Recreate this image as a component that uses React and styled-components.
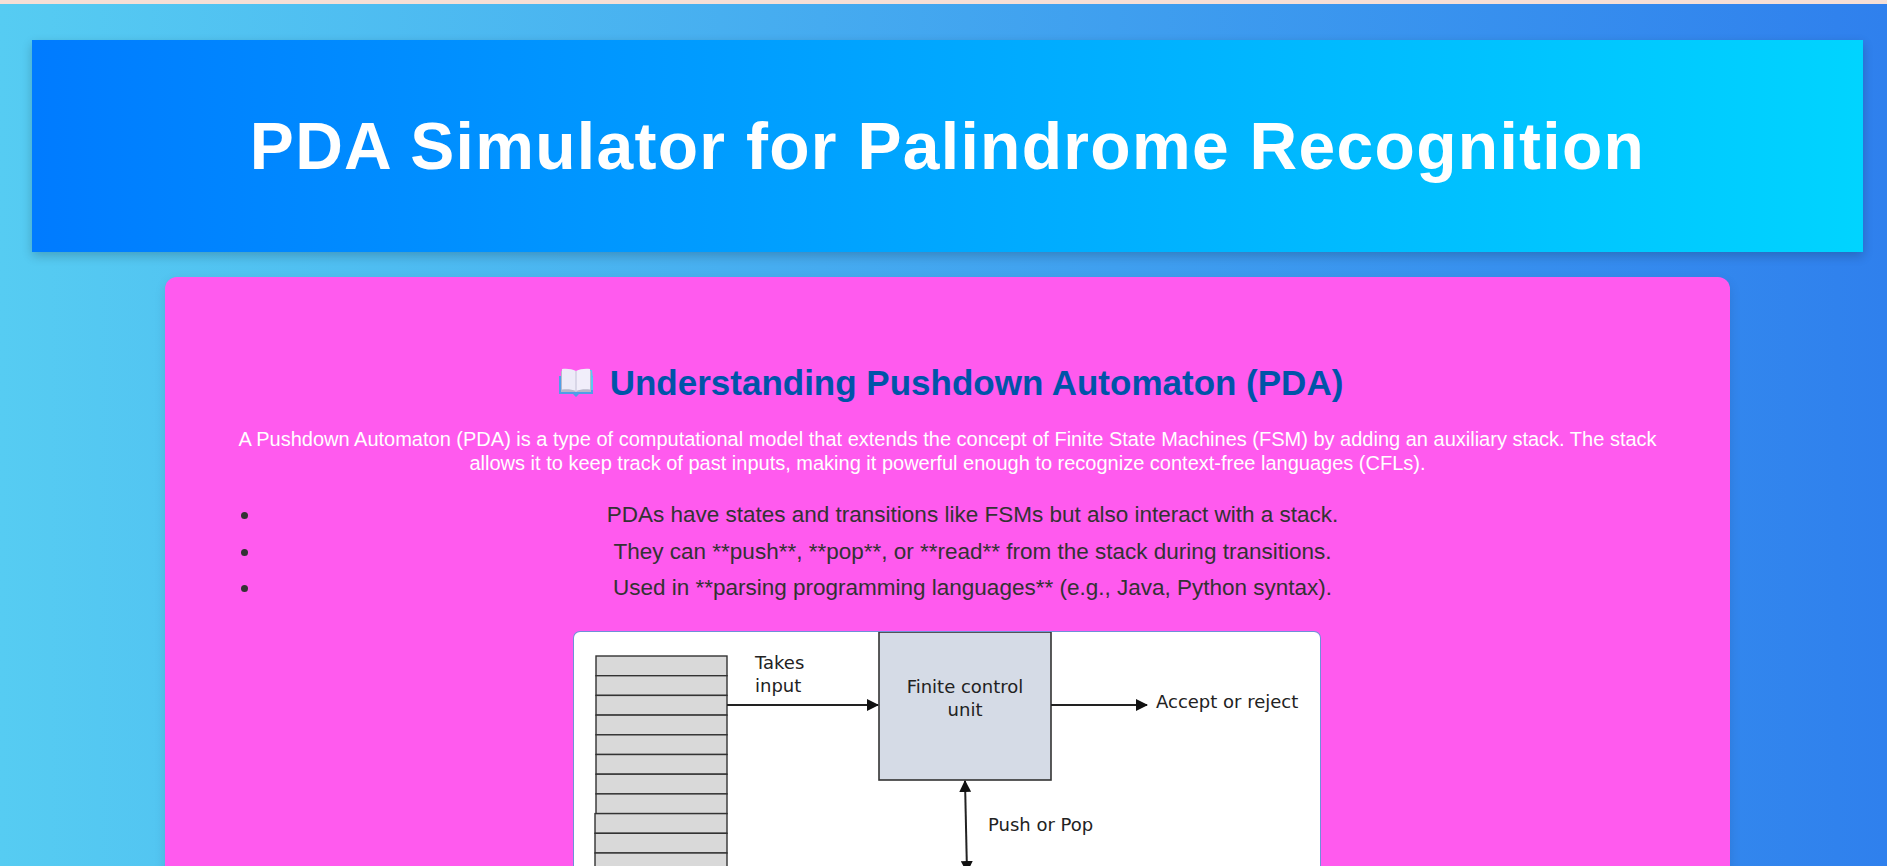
import React from 'react';
import styled, { createGlobalStyle } from 'styled-components';

const GlobalStyle = createGlobalStyle`
  html, body {
    margin: 0;
    height: 100%;
    overflow: hidden;
  }
  body {
    font-family: "Liberation Sans", Arial, sans-serif;
  }
`;

const TopStrip = styled.div`
  height: 4px;
  background: #f5dfd6;
`;

const Page = styled.div`
  box-sizing: border-box;
  height: 862px;
  overflow: hidden;
  padding: 36px 24px 0 32px;
  background: linear-gradient(to right, #56ccf2, #2f80ed);
`;

const Header = styled.header`
  height: 212px;
  display: flex;
  align-items: center;
  justify-content: center;
  background: linear-gradient(to right, #007bff, #00d4ff);
  box-shadow: 0 4px 10px rgba(0, 0, 0, 0.2);
`;

const Title = styled.h1`
  margin: 0;
  color: #fff;
  font-size: 66px;
  font-weight: 700;
  letter-spacing: 1.3px;
`;

const Card = styled.section`
  box-sizing: border-box;
  width: 1565px;
  margin: 25px auto 0;
  padding: 86px 46px 40px;
  background: #ff5aee;
  border-radius: 12px;
  box-shadow: 0 4px 12px rgba(0, 0, 0, 0.1);
  text-align: center;
`;

const Heading = styled.h2`
  display: flex;
  align-items: center;
  justify-content: center;
  gap: 16px;
  margin: 0 0 24px;
  padding-left: 6px;
  color: #0054a8;
  font-size: 35px;
  font-weight: 700;
  line-height: 40px;
`;

const Intro = styled.p`
  margin: 0 0 22px;
  color: #fff;
  font-size: 20px;
  line-height: 24px;
`;

const Points = styled.ul`
  margin: 0 0 25px 4px;
  padding: 0 0 0 46px;
  color: #333;
`;

const Point = styled.li`
  font-size: 22.5px;
  line-height: 36.6px;
`;

const Diagram = styled.svg`
  display: block;
  margin: 0 0 0 362.5px;
  background: #fff;
  border-radius: 6px;
  box-shadow: 0 0 0 1px #6f8fd8;
`;

const BookIcon = () => (
  <svg width="36" height="30" viewBox="0 0 36 30" aria-hidden="true">
    <path d="M1 8h34v18H21l-3 3-3-3H1z" fill="#4f9fe8" />
    <path d="M31 2h3l1 8v12h-4z" fill="#5bc8f0" />
    <path d="M3 3h30v21H3z" fill="#b7b7ca" />
    <path d="M4 1c5-.6 10 0 14 2v20c-4-1.6-9-2-14-1.4z" fill="#edebf8" />
    <path d="M32 1c-5-.6-10 0-14 2v20c4-1.6 9-2 14-1.4z" fill="#f1eefa" />
    <path d="M18 3v21" stroke="#cfcde0" strokeWidth="1.4" />
  </svg>
);

const rows = Array.from({ length: 14 }, (_, i) => 24 + i * 19.7);

const FlowDiagram = () => (
  <Diagram width="746" height="330" viewBox="0 0 746 330">
    <defs>
      <marker id="tip" markerWidth="6" markerHeight="6" refX="5.5" refY="3" orient="auto-start-reverse">
        <path d="M0 0L6 3L0 6z" fill="#111" />
      </marker>
    </defs>
    {rows.map((y, i) => (
      <rect key={y} x={i > 7 ? 21 : 22} y={y} width={i > 7 ? 132 : 131} height="19.7" fill="#d9d9d9" stroke="#333" strokeWidth="1.4" />
    ))}
    <rect x="305" y="0" width="172" height="148" fill="#d5dbe6" stroke="#333" strokeWidth="1.6" />
    <path d="M153 73H304" stroke="#222" strokeWidth="2" markerEnd="url(#tip)" />
    <path d="M477 73H573" stroke="#222" strokeWidth="2" markerEnd="url(#tip)" />
    <path d="M391 149L393 240" stroke="#222" strokeWidth="2" markerStart="url(#tip)" markerEnd="url(#tip)" />
    <g fontFamily="'DejaVu Sans', sans-serif" fontSize="18" fill="#222">
      <text x="181" y="37">Takes</text>
      <text x="181" y="60">input</text>
      <text x="391" y="61" textAnchor="middle">Finite control</text>
      <text x="391" y="84" textAnchor="middle">unit</text>
      <text x="582" y="76">Accept or reject</text>
      <text x="414" y="199">Push or Pop</text>
    </g>
  </Diagram>
);

export default function App() {
  return (
    <>
      <GlobalStyle />
      <TopStrip />
      <Page>
        <Header>
          <Title>PDA Simulator for Palindrome Recognition</Title>
        </Header>
        <Card>
          <Heading>
            <BookIcon />
            <span>Understanding Pushdown Automaton (PDA)</span>
          </Heading>
          <Intro>
            A Pushdown Automaton (PDA) is a type of computational model that extends the concept of Finite State Machines (FSM) by adding an auxiliary stack. The stack allows it to keep track of past inputs, making it powerful enough to recognize context-free languages (CFLs).
          </Intro>
          <Points>
            <Point>PDAs have states and transitions like FSMs but also interact with a stack.</Point>
            <Point>They can **push**, **pop**, or **read** from the stack during transitions.</Point>
            <Point>Used in **parsing programming languages** (e.g., Java, Python syntax).</Point>
          </Points>
          <FlowDiagram />
        </Card>
      </Page>
    </>
  );
}
